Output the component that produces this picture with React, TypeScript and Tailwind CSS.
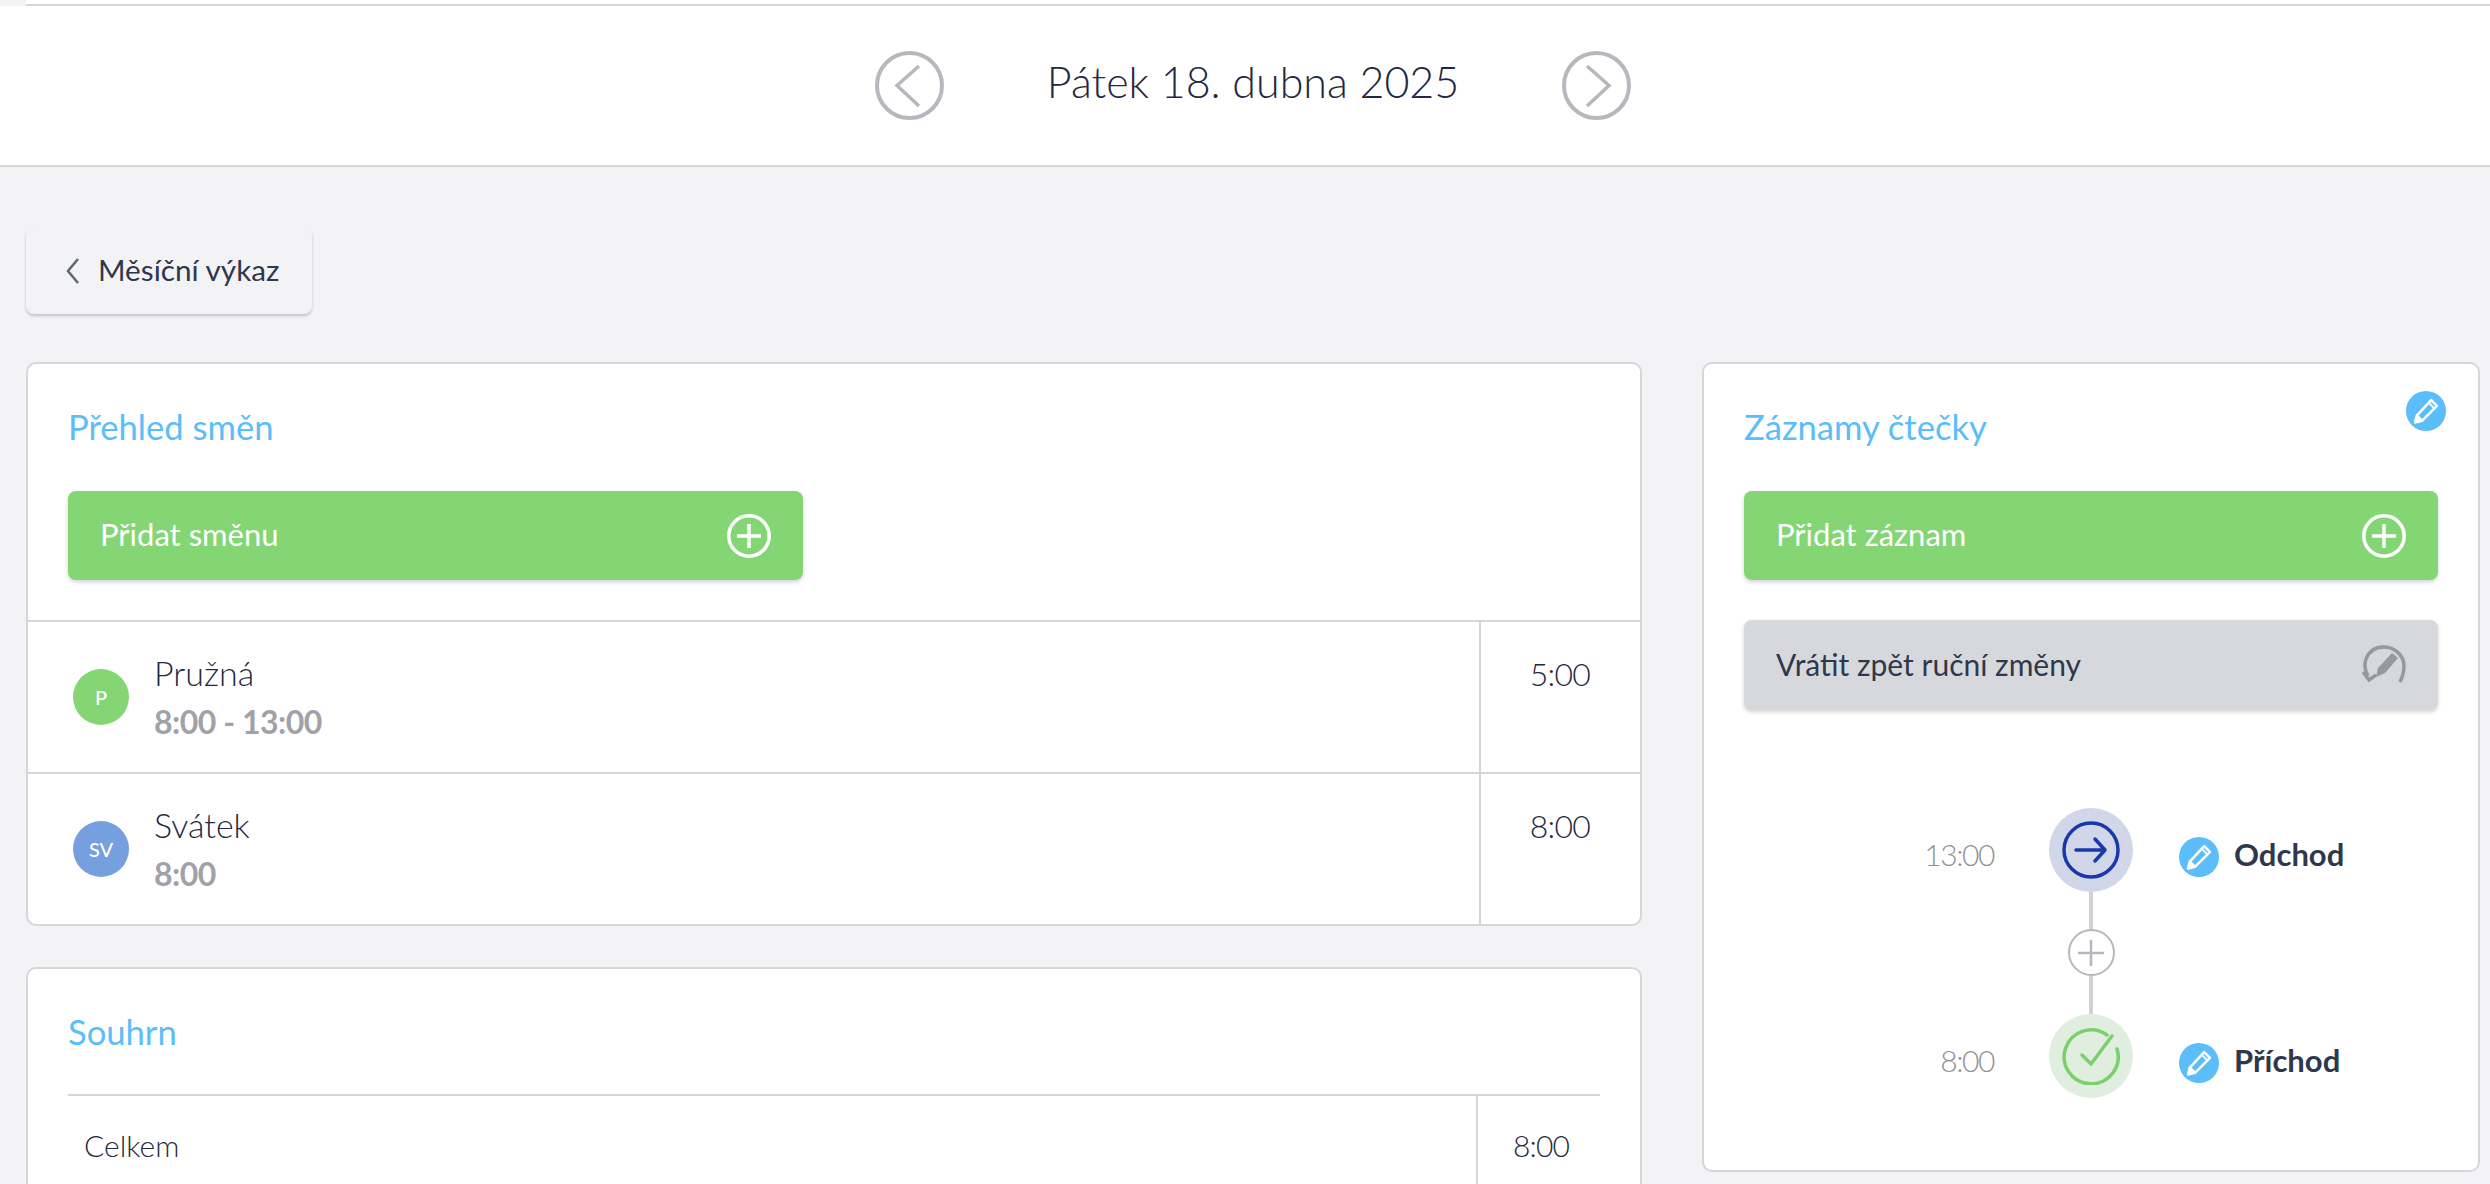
const F = "font-['Source_Sans_Pro','Lato',sans-serif]";

function Pencil({ size = 40 }: { size?: number }) {
  return (
    <div className="rounded-full bg-[#5bbdfa] flex items-center justify-center shrink-0" style={{ width: size, height: size }}>
      <svg width="30" height="30" viewBox="0 0 26 26" fill="none" stroke="#fff" strokeWidth="2.2" strokeLinejoin="round" strokeLinecap="round">
        <path d="M17.5 3.5l5 5L9.5 21.5 3.5 23l1.5-6z" />
        <path d="M15.5 6l4.5 4.5" strokeWidth="1.5" />
        <path d="M4 22.5l1.5-5 3.5 3.5z" fill="#fff" />
      </svg>
    </div>
  );
}

function Plus() {
  return (
    <svg width="44" height="44" viewBox="0 0 44 44" fill="none" stroke="#fff" strokeWidth="3.5" className="shrink-0">
      <circle cx="22" cy="22" r="20.2" />
      <path d="M22 10v24M10 22h24" />
    </svg>
  );
}

function Nav({ next }: { next?: boolean }) {
  return (
    <svg width="69" height="69" viewBox="0 0 69 69" fill="none" stroke="#b5b8bd" className="shrink-0">
      <circle cx="34.5" cy="34.5" r="32.5" strokeWidth="4" />
      {next ? <path d="M25 15l22 19.5L25 55" strokeWidth="3.5" /> : <path d="M44 15L22 34.5 44 55" strokeWidth="3.5" />}
    </svg>
  );
}

function Row({ badge, color, name, sub, value }: { badge: string; color: string; name: string; sub: string; value: string }) {
  return (
    <div className="flex h-[152px] border-t-2 border-[#d6d6da]">
      <div className="flex-1 flex items-center pl-[45px] border-r-2 border-[#d6d6da]">
        <div className="w-[56px] h-[56px] rounded-full flex items-center justify-center text-white text-[20px] font-medium" style={{ background: color }}>{badge}</div>
        <div className="ml-[26px]">
          <div className="text-[34px] leading-[48px] font-light text-[#1f2a40] -ml-[1px]">{name}</div>
          <div className="text-[32px] leading-[48px] font-bold tracking-[-0.5px] text-[#a0a2a8] -ml-[1px] mt-[1px]">{sub}</div>
        </div>
      </div>
      <div className="w-[159px] pt-[28px] pr-[50px] text-right text-[32px] leading-[48px] font-light tracking-[-0.8px] text-[#1f2a40]">{value}</div>
    </div>
  );
}

function Title({ children }: { children: string }) {
  return <div className="text-[34.6px] leading-[48px] font-normal text-[#5bbdfa]">{children}</div>;
}

function GreenButton({ label, className }: { label: string; className: string }) {
  return (
    <div className={`h-[89px] rounded-[8px] bg-[#84d674] shadow-[0_2px_4px_rgba(0,0,0,0.18)] flex items-center justify-between pl-[32px] pr-[32px] text-white text-[31px] ${className}`}>
      <span className="-mt-[2px]">{label}</span>
      <Plus />
    </div>
  );
}

function Event({ time, label, bg, children }: { time: string; label: string; bg: string; children: React.ReactNode }) {
  return (
    <div className="flex items-center h-[84px]">
      <div className="w-[290px] text-right text-[30px] font-light tracking-[-1.4px] text-[#8f9197] mt-[8px]">{time}</div>
      <div className="ml-[55px] w-[84px] h-[84px] rounded-full flex items-center justify-center shrink-0" style={{ background: bg }}>{children}</div>
      <div className="ml-[46px] mt-[14px]"><Pencil /></div>
      <div className="ml-[15px] text-[31px] font-bold text-[#2e384d] mt-[8px]">{label}</div>
    </div>
  );
}

export default function App() {
  return (
    <div className={`h-screen overflow-hidden bg-[#f3f3f5] ${F}`}>
      <div className="flex h-[6px]">
        <div className="w-[26px] bg-[#f3f3f5]" />
        <div className="flex-1 bg-white border-b-2 border-[#d6d6da]" />
      </div>
      <div className="h-[161px] bg-white border-b-2 border-[#d6d6da] flex items-center justify-center pl-[16px] pb-[1px]">
        <Nav />
        <div className="w-[618px] text-center text-[43px] font-light text-[#1f2a40] whitespace-nowrap -mt-[5px]">Pátek 18. dubna 2025</div>
        <Nav next />
      </div>
      <div className="pl-[26px] pr-[10px] pt-[60px]">
        <div className="w-[286px] h-[87px] rounded-[8px] bg-[#f3f3f5] shadow-[0_2px_3px_rgba(0,0,0,0.2)] flex items-center pl-[40px] text-[#2e384d] text-[29.7px]">
          <svg width="13" height="26" viewBox="0 0 13 26" fill="none" stroke="#5c6675" strokeWidth="2.5" className="shrink-0"><path d="M12 1L2 13l10 12" /></svg>
          <span className="ml-[19px]">Měsíční výkaz</span>
        </div>
        <div className="flex gap-[60px] mt-[48px] items-start">
          <div className="w-[1616px] flex flex-col gap-[41px]">
            <div className="bg-white border-2 border-[#d6d6da] rounded-[10px]">
              <div className="px-[40px] pt-[39px] pb-[40px]">
                <Title>Přehled směn</Title>
                <GreenButton label="Přidat směnu" className="mt-[40px] w-[735px]" />
              </div>
              <Row badge="P" color="#84d674" name="Pružná" sub="8:00 - 13:00" value="5:00" />
              <Row badge="SV" color="#769fdf" name="Svátek" sub="8:00" value="8:00" />
            </div>
            <div className="bg-white border-2 border-[#d6d6da] rounded-[10px] px-[40px] pt-[39px] h-[400px]">
              <Title>Souhrn</Title>
              <div className="mt-[38px] flex border-t-2 border-[#d6d6da] text-[30px] font-light text-[#1f2a40]">
                <div className="flex-1 pl-[16px] pt-[27px] pb-[30px] border-r-2 border-[#d6d6da]">Celkem</div>
                <div className="w-[122px] pl-[35px] pt-[27px] tracking-[-0.8px]">8:00</div>
              </div>
            </div>
          </div>
          <div className="w-[778px] h-[810px] bg-white border-2 border-[#d6d6da] rounded-[10px] relative px-[40px] pt-[39px]">
            <div className="absolute top-[27px] right-[32px]"><Pencil /></div>
            <Title>Záznamy čtečky</Title>
            <GreenButton label="Přidat záznam" className="mt-[40px]" />
            <div className="mt-[40px] h-[90px] rounded-[8px] bg-[#d7d8dc] shadow-[0_2px_4px_rgba(0,0,0,0.18)] flex items-center justify-between pl-[32px] pr-[32px] text-[#2e384d] text-[30px]">
              <span className="-mt-[2px]">Vrátit zpět ruční změny</span>
              <svg width="44" height="40" viewBox="0 0 44 40" fill="none" stroke="#97989d" strokeWidth="3.5" className="shrink-0">
                <path d="M6 31C3 26 2 20 4 14 7 6 14 2 22 2c10 0 20 8 20 19 0 5-1 10-4 16" />
                <path d="M1 27l6 8 7-5" strokeWidth="3.5" />
                <path d="M30 8l6 5-13 15-9 4 2-9z" fill="#97989d" stroke="none" />
              </svg>
            </div>
            <div className="-mx-[40px] mt-[98px]">
              <Event time="13:00" label="Odchod" bg="#d1d6e8">
                <svg width="58" height="58" viewBox="0 0 58 58" fill="none" stroke="#1a39a8" strokeWidth="3.5">
                  <circle cx="29" cy="29" r="27" />
                  <path d="M14 29h28M33 18l10 11-10 11" strokeLinecap="round" strokeLinejoin="round" />
                </svg>
              </Event>
              <div className="ml-[345px] w-[84px] flex flex-col items-center">
                <div className="w-[4px] h-[37px] bg-[#d0d0d6]" />
                <div className="w-[47px] h-[47px] rounded-full border-2 border-[#b5b8bd] flex items-center justify-center shrink-0">
                  <svg width="28" height="28" viewBox="0 0 28 28" stroke="#b5b8bd" strokeWidth="2.5"><path d="M14 1v26M1 14h26" /></svg>
                </div>
                <div className="w-[4px] h-[38px] bg-[#d0d0d6]" />
              </div>
              <Event time="8:00" label="Příchod" bg="#e0eedf">
                <svg width="58" height="58" viewBox="0 0 58 58" fill="none" stroke="#7ccf6b" strokeWidth="3.5" strokeLinecap="round" strokeLinejoin="round">
                  <path d="M45 8A27 27 0 1 0 55 22" />
                  <path d="M20 28l9 9L50 9" />
                </svg>
              </Event>
            </div>
          </div>
        </div>
      </div>
    </div>
  );
}
